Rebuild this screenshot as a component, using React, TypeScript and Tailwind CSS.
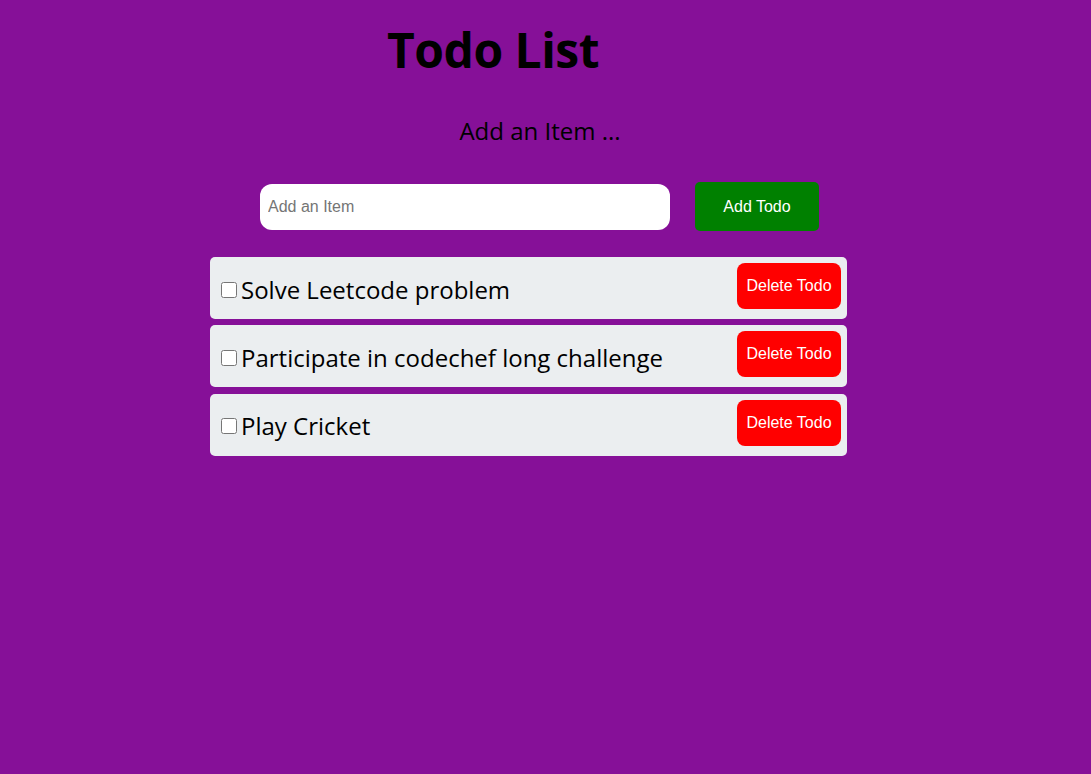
import React from "react";

const items = [
  "Solve Leetcode problem",
  "Participate in codechef long challenge",
  "Play Cricket",
];

export default function App() {
  return (
    <div
      className="min-h-[774px] w-full bg-[#861098] text-black"
      style={{ fontFamily: '"Open Sans", "Noto Sans", sans-serif' }}
    >
      <div className="w-[637px] ml-[210px] pt-[18px]">
        <h1 className="ml-[177px] text-[48px] font-bold leading-[64px] tracking-[-0.5px]">
          Todo List
        </h1>
        <h2 className="mt-[33px] text-center ml-[23px] text-[24px] leading-[32px]">
          Add an Item ...
        </h2>
        <div className="mt-[35px] flex items-center ml-[50px]">
          <input
            placeholder="Add an Item"
            className="w-[410px] h-[46px] rounded-[12px] bg-white px-[8px] text-[16px] outline-none placeholder:text-[#757575]"
            style={{ fontFamily: '"Liberation Sans", Arial, sans-serif' }}
          />
          <button
            className="ml-[25px] w-[124px] h-[49px] rounded-[5px] bg-[#008000] text-white text-[16px]"
            style={{ fontFamily: '"Liberation Sans", Arial, sans-serif' }}
          >
            Add Todo
          </button>
        </div>
        <div className="mt-[26px] flex flex-col gap-[6.25px]">
          {items.map((t) => (
            <div
              key={t}
              className="h-[62px] rounded-[5px] bg-[#ebeef0] flex items-center pl-[11px] pr-[6px]"
            >
              <input type="checkbox" className="w-[16px] h-[16px] m-0 mr-[4px] mt-[3px]" />
              <span className="text-[24px] leading-[32px] flex-1 mt-[3px]">{t}</span>
              <button
                className="self-start mt-[6px] w-[104px] h-[46px] rounded-[8px] bg-[#ff0000] text-white text-[16px]"
                style={{ fontFamily: '"Liberation Sans", Arial, sans-serif' }}
              >
                Delete Todo
              </button>
            </div>
          ))}
        </div>
      </div>
    </div>
  );
}
